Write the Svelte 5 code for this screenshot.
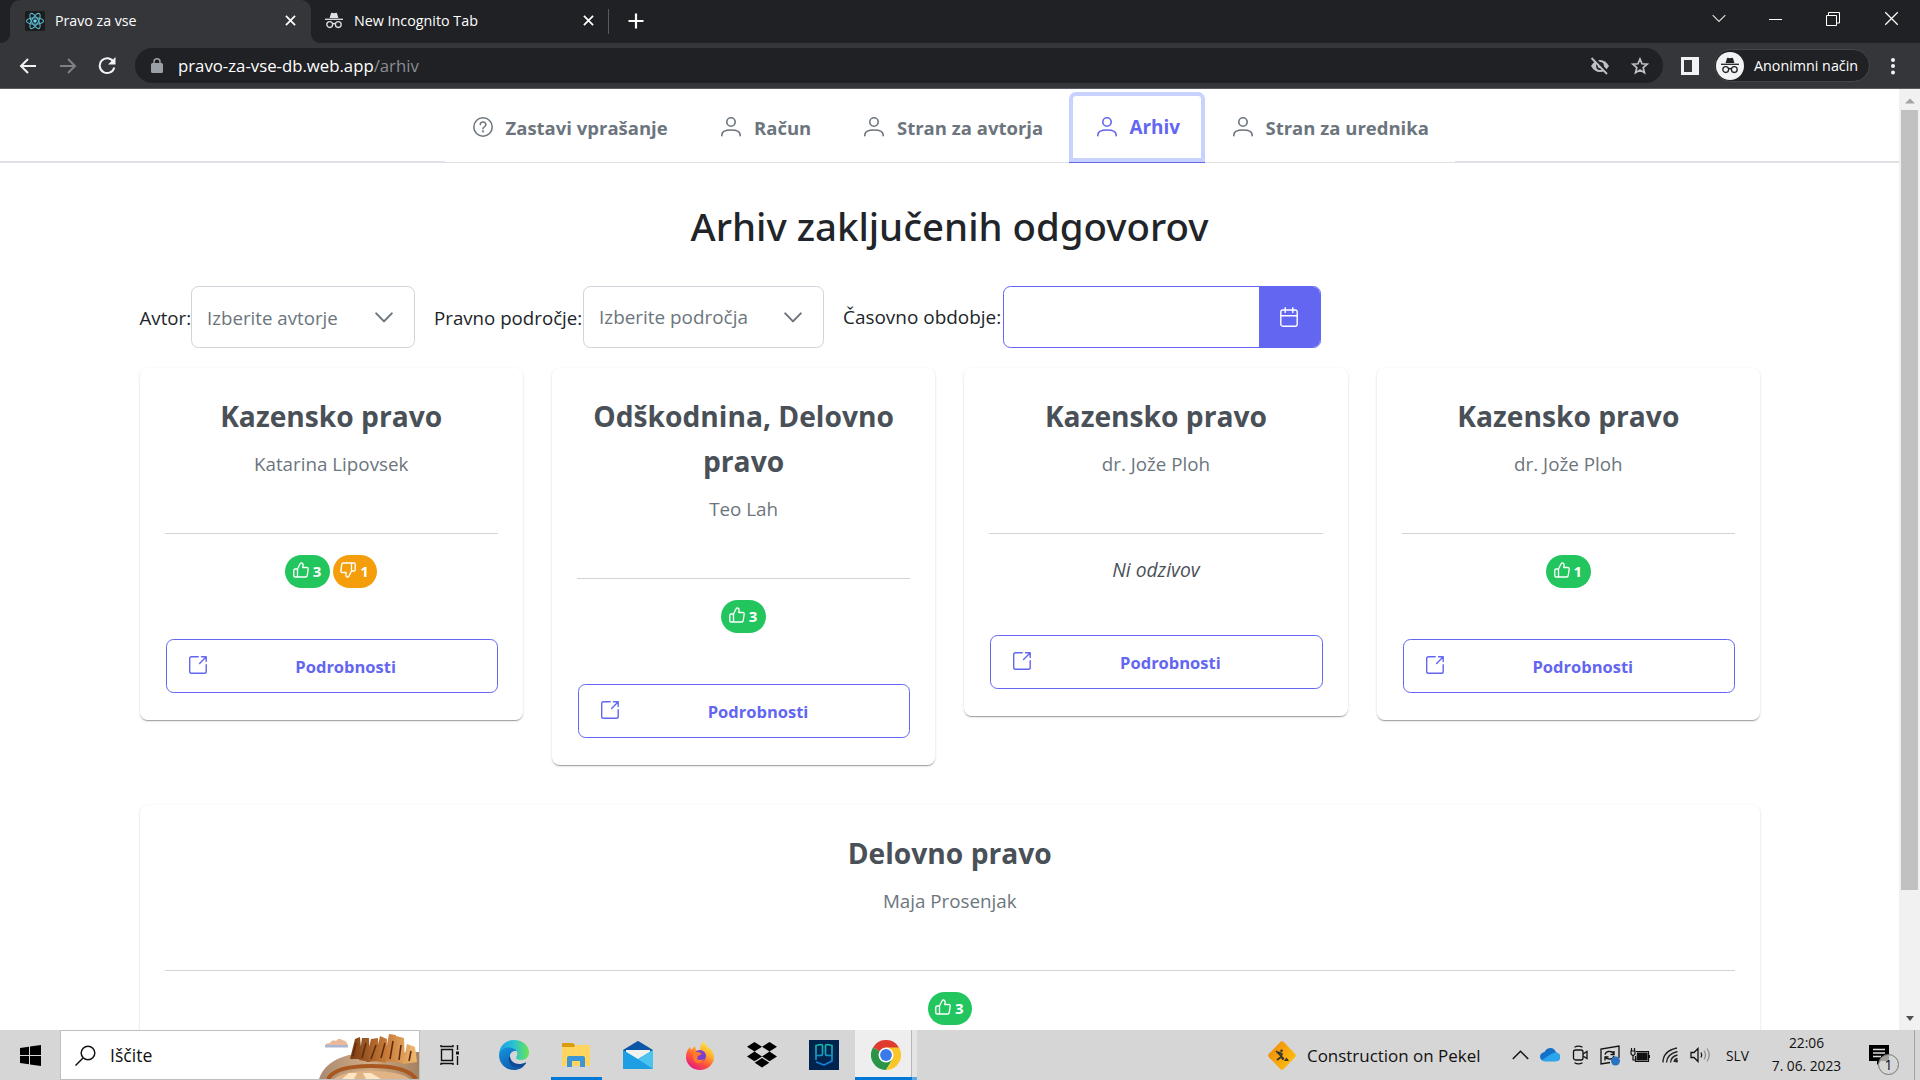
<script>
  const menu = [
    { label: 'Zastavi vprašanje', icon: 'question', key: 'ask' },
    { label: 'Račun', icon: 'user', key: 'account' },
    { label: 'Stran za avtorja', icon: 'user', key: 'writer' },
    { label: 'Arhiv', icon: 'user', key: 'archive', active: true },
    { label: 'Stran za urednika', icon: 'user', key: 'editor' }
  ];

  const cards = [
    { title: 'Kazensko pravo', author: 'Katarina Lipovsek', up: 3, down: 1 },
    { title: 'Odškodnina, Delovno pravo', author: 'Teo Lah', up: 3 },
    { title: 'Kazensko pravo', author: 'dr. Jože Ploh' },
    { title: 'Kazensko pravo', author: 'dr. Jože Ploh', up: 1 },
    { title: 'Delovno pravo', author: 'Maja Prosenjak', up: 3, wide: true }
  ];
</script>

{#snippet user()}
  <svg width="20" height="20" viewBox="0 0 20 20" fill="none" stroke="currentColor" stroke-width="1.6" stroke-linecap="round">
    <circle cx="10" cy="5" r="4.2" />
    <path d="M.8 18.800v-.7c0-3.800 3.400-5.100 9.200-5.100s9.200 1.300 9.200 5.100v.7" />
  </svg>
{/snippet}

{#snippet question()}
  <svg width="20" height="20" viewBox="0 0 20 20" fill="none" stroke="currentColor" stroke-width="1.5" stroke-linecap="round">
    <circle cx="10" cy="10" r="9.2" />
    <path d="M7.3 7.6a2.75 2.6 0 1 1 4.1 2.2c-1 .5-1.4.8-1.4 1.9" />
    <circle cx="10" cy="14.4" r=".4" fill="currentColor" />
  </svg>
{/snippet}

{#snippet incognito(color)}
  <svg width="18" height="17" viewBox="0 0 18 17" fill="none" stroke={color} stroke-width="1.3">
    <path d="M4.6 6 6 1.2q.2-.6.9-.4l2.1.5 2.1-.5q.7-.2.9.4L13.400 6z" fill={color} stroke="none" />
    <path d="M0 7.300h18" />
    <circle cx="4.700" cy="12.600" r="2.900" />
    <circle cx="13.300" cy="12.600" r="2.900" />
    <path d="M7.500 12q1.500-1 3 0" />
  </svg>
{/snippet}

{#snippet cross(size, w)}
  <svg width={size} height={size} viewBox="0 0 12 12" fill="none" stroke="#fff" stroke-width={w}><path d="M1 1l10 10M11 1 1 11" /></svg>
{/snippet}

{#snippet thumb()}
  <svg width="16" height="16" viewBox="0 0 16 16" fill="none" stroke="#fff" stroke-width="1.35" stroke-linejoin="round">
    <path d="M4.500 7h-2.500q-1.200 0-1.200 1.200v5.600q0 1.200 1.200 1.200h2.500zM4.500 7l2.600-5.300q.4-.9 1.300-.9 1.800.2 1.700 2.200l-.3 2.500h4q1.500 0 1.400 1.500l-1 6.600q-.2 1.400-1.500 1.400H4.500" />
  </svg>
{/snippet}

{#snippet select(label, placeholder, cls)}
  <span class="label {cls}-label">{label}</span>
  <div class="select {cls}">
    <span>{placeholder}</span>
    <svg width="18" height="11" viewBox="0 0 18 11" fill="none" stroke="#6c757d" stroke-width="2" stroke-linecap="round" stroke-linejoin="round"><path d="M1.200 1.400 9 9.400l7.800-8" /></svg>
  </div>
{/snippet}

<div class="screen">
  <header class="browser">
    <div class="tabs">
      <div class="tab current">
        <svg class="favicon" width="20" height="20" viewBox="0 0 20 20">
          <rect width="20" height="20" rx="2" fill="#1c1c1c" />
          <g fill="none" stroke="#58b7cf" stroke-width="1.100">
            <ellipse cx="10" cy="10" rx="8.600" ry="3.300" />
            <ellipse cx="10" cy="10" rx="8.600" ry="3.300" transform="rotate(60 10 10)" />
            <ellipse cx="10" cy="10" rx="8.600" ry="3.300" transform="rotate(120 10 10)" />
          </g>
          <circle cx="10" cy="10" r="1.700" fill="#61dafb" />
        </svg>
        <span>Pravo za vse</span>
        {@render cross(11, 1.9)}
      </div>
      <div class="tab">
        {@render incognito('#dfe1e5')}
        <span>New Incognito Tab</span>
        {@render cross(11, 1.9)}
      </div>
      <svg class="plus" width="16" height="16" viewBox="0 0 16 16" stroke="#fff" stroke-width="2.200"><path d="M8 .5v15M.5 8h15" /></svg>
      <div class="window">
        <svg width="14" height="9" viewBox="0 0 14 9" fill="none" stroke="#ddd" stroke-width="1.200"><path d="m.7 1.200 6.300 6.300 6.300-6.300" /></svg>
        <svg width="13" height="14" viewBox="0 0 13 14" stroke="#fff"><path d="M0 7.500h13" /></svg>
        <svg width="14" height="14" viewBox="0 0 14 14" fill="none" stroke="#fff"><path d="M.5 3.500h10v10H.5zM2.500 3.500v-3h11v10.500h-3" /></svg>
        {@render cross(15, 1)}
      </div>
    </div>

    <div class="toolbar">
      <svg width="17" height="16" viewBox="0 0 17 16" fill="none" stroke="#f1f3f4" stroke-width="2"><path d="M17 8H2M9 1 2 8l7 7" /></svg>
      <svg width="17" height="16" viewBox="0 0 17 16" fill="none" stroke="#808184" stroke-width="2"><path d="M0 8h15M8 1l7 7-7 7" /></svg>
      <svg class="reload" width="18" height="18" viewBox="0 0 18 18" fill="none" stroke="#f1f3f4" stroke-width="2"><path d="M15.400 4.700a7.400 7.400 0 1 0 .9 5.800" /><path d="M17.500 0v7.500H10z" fill="#f1f3f4" stroke="none" /></svg>
      <div class="omnibox">
        <svg width="12" height="15" viewBox="0 0 12 15"><rect y="5" width="12" height="10" rx="1.500" fill="#9aa0a6" /><path d="M3 6V3.800a3 3 0 0 1 6 0V6" fill="none" stroke="#9aa0a6" stroke-width="1.500" /></svg>
        <span class="url">pravo-za-vse-db.web.app<i>/arhiv</i></span>
        <svg width="20" height="18" viewBox="0 0 20 18"><path d="M1 9q3.500-6 9-6t9 6q-3.500 6-9 6T1 9z" fill="#bdc1c6" /><circle cx="10" cy="9" r="3.900" fill="#202124" /><circle cx="10" cy="9" r="2.300" fill="#bdc1c6" /><path d="M3 0l15 16" stroke="#202124" stroke-width="3" /><path d="M1.500 1 17 17" stroke="#bdc1c6" stroke-width="1.800" /></svg>
        <svg width="18" height="18" viewBox="0 0 18 18" fill="none" stroke="#bdc1c6" stroke-width="1.700"><path d="m9 2 2 4.800 5.200.4-4 3.400 1.300 5.100L9 13l-4.500 2.700 1.300-5.100-4-3.400 5.200-.4z" /></svg>
      </div>
      <svg class="panel" width="18" height="18" viewBox="0 0 18 18"><path d="M0 0h18v18H0zM3 3v12h8V3z" fill="#f1f3f4" fill-rule="evenodd" /></svg>
      <div class="profile">
        <div class="avatar">{@render incognito('#202124')}</div>
        <span>Anonimni način</span>
      </div>
      <svg width="4" height="18" viewBox="0 0 4 18" fill="#f1f3f4"><circle cx="2" cy="3" r="2" /><circle cx="2" cy="9" r="2" /><circle cx="2" cy="15.500" r="2" /></svg>
    </div>
  </header>

  <div class="viewport">
    <main>
      <nav>
        <ul>
          {#each menu as item}
            <li class={[item.key, item.active && 'active']}>
              {#if item.icon === 'question'}{@render question()}{:else}{@render user()}{/if}
              <span>{item.label}</span>
            </li>
          {/each}
        </ul>
      </nav>

      <h1>Arhiv zaključenih odgovorov</h1>

      <div class="filters">
        {@render select('Avtor:', 'Izberite avtorje', 'authors')}
        {@render select('Pravno področje:', 'Izberite področja', 'fields')}
        <span class="label date-label">Časovno obdobje:</span>
        <div class="date">
          <button aria-label="Koledar">
            <svg width="18" height="20" viewBox="0 0 18 20" fill="none" stroke="#fff" stroke-width="1.400" stroke-linecap="round"><rect x=".8" y="3" width="16.400" height="16.200" rx="2" /><path d="M1 8.800h16M5.200.8v4.700M12.800.8v4.700" /></svg>
          </button>
        </div>
      </div>

      <div class="cards">
        {#each cards as card}
          <article class:wide={card.wide}>
            <h2>{card.title}</h2>
            <p class="author">{card.author}</p>
            <hr />
            {#if card.up || card.down}
              <div class="badges">
                {#if card.up}<span class="badge up">{@render thumb()}{card.up}</span>{/if}
                {#if card.down}<span class="badge down">{@render thumb()}{card.down}</span>{/if}
              </div>
            {:else}
              <p class="none">Ni odzivov</p>
            {/if}
            {#if !card.wide}
              <button class="details">
                <svg width="18" height="18" viewBox="0 0 18 18" fill="none" stroke="currentColor" stroke-width="1.400" stroke-linecap="round" stroke-linejoin="round"><path d="M9.200.8H2.500Q.7.8.7 2.600v12.900q0 1.800 1.800 1.800h12.900q1.800 0 1.800-1.800V8.800M12.500.8h4.700v4.700M17 1l-6.400 6.400" /></svg>
                <span>Podrobnosti</span>
              </button>
            {/if}
          </article>
        {/each}
      </div>
    </main>
    <div class="scrollbar">
      <svg width="10" height="6" viewBox="0 0 10 6"><path d="M0 5.500 5 .5l5 5z" fill="#a3a3a3" /></svg>
      <div class="handle"></div>
      <svg width="8" height="5" viewBox="0 0 8 5"><path d="M0 0h8L4 5z" fill="#505050" /></svg>
    </div>
  </div>

  <footer>
    <div class="cell start"><svg width="21" height="21" viewBox="0 0 21 21"><path d="M0 3l9-1.300v8.300H0zM10 1.500 21 0v10H10zM0 11h9v8.300L0 18zM10 11h11v10l-11-1.500z" /></svg></div>
    <div class="search">
      <svg width="21" height="21" viewBox="0 0 21 21" fill="none" stroke="#111" stroke-width="1.500"><circle cx="13" cy="8" r="6.800" /><path d="M8 13l-7.500 7.500" /></svg>
      <span>Iščite</span>
      <svg class="art" width="100" height="46" viewBox="0 0 100 46">
        <defs>
          <linearGradient id="rock" x1="0" x2="1"><stop offset="0" stop-color="#7a3c12" /><stop offset=".55" stop-color="#c97c3a" /><stop offset="1" stop-color="#eebb72" /></linearGradient>
          <linearGradient id="sand" x1="0" x2="1"><stop offset="0" stop-color="#a98a70" /><stop offset=".5" stop-color="#d0ac86" /><stop offset="1" stop-color="#a48161" /></linearGradient>
        </defs>
        <path d="M6 13q0-3 5-3 2-4 6-2 3-4 6-1 5 0 6 6z" fill="#eab99b" /><path d="M6 12h23v2.500H6z" fill="#a9b5d2" />
        <path d="M0 46q6-18 30-24l70-3v27z" fill="url(#sand)" />
        <g fill="url(#rock)">
          <path d="m31 26 5-20 5-2 2 22zM40 27l3-22 7 0 1 24zM47 29l5-23 7-1 1 23zM56 28l5-25 7 3-1 24zM65 28l5-27 7 1v27zM75 28l2-25 8 2 1 26zM84 31l4-20 8 3 2 15z" />
        </g>
        <path d="M37 10l-3 13M47 10l-4 15M57 12l-5 14M66 10l-4 15M74 8l-3 18M82 12l-2 15M92 18l-2 10" stroke="#632d0d" stroke-width="1.600" />
        <path d="M9 46q7-13 43-13t45 13" fill="none" stroke="#a85820" stroke-width="4" />
        <path d="M15 46q8-8 37-8t39 8z" fill="#e1b488" />
        <path d="M23 46l7-6h8l-3 6zM47 46l-3-6h8l10 6z" fill="#ffe5c2" />
      </svg>
    </div>
    <div class="cell view"><svg width="20" height="20" viewBox="0 0 20 20" fill="none" stroke="#111" stroke-width="1.400"><path d="M1.500 4.500h11v11h-11zM1 0v1.500h12V0M1 20v-1.500h12V20M17.500 0v5M17.500 11v9" /><path d="M16 6.500h3v3h-3z" fill="#111" stroke="none" /></svg></div>
    <div class="cell">
      <svg width="30" height="30" viewBox="0 0 30 30">
        <defs>
          <linearGradient id="edge-a" x1="0" x2="1"><stop offset="0" stop-color="#1b9de2" /><stop offset=".5" stop-color="#2bc3d2" /><stop offset="1" stop-color="#6be34f" /></linearGradient>
          <linearGradient id="edge-b" x1="0" x2=".7" y2="1"><stop offset="0" stop-color="#1594e0" /><stop offset="1" stop-color="#0d57a8" /></linearGradient>
        </defs>
        <path d="M0 14C1 5 7 0 15 0c9 0 15 6 15 12.500 0 5-4 7.500-8 7.500-5 0-5.500-2-4.200-4C20 11 15 8 10 8.500 5 9 2 11 0 14z" fill="url(#edge-a)" />
        <path d="M0 15c1-5 5-7.500 10-7.500 3 0 6 1.500 7.500 3.500-4-.5-7 2-6.500 6 .6 6 8 9.500 16 6C24 28 20 30 15 30 6.500 30 0 23.500 0 15z" fill="url(#edge-b)" />
        <path d="M11 16c0 7 8 10 15.500 6.500q1-.3.500.8C23 29 14 29 10.500 23Q8.500 18 11 16z" fill="#124a93" />
      </svg>
    </div>
    <div class="cell running"><svg width="28" height="24" viewBox="0 0 28 24"><path d="M0 1q0-1 1-1h9q1 0 2 1l2 3H0z" fill="#dd9c0b" /><path d="M0 4h12l2-2h13q1 0 1 1v20H0z" fill="#ffd560" /><path d="M5 24v-9q0-2 2-2h14q2 0 2 2v9h-5v-6h-8v6z" fill="#3d95d6" /></svg></div>
    <div class="cell"><svg width="30" height="28" viewBox="0 0 30 28"><path d="M0 9 14 .4q1-.6 2 0L30 9v5H0z" fill="#0d56a5" /><path d="M3 9h24v5l-12 6-12-6z" fill="#f2f2f2" /><path d="M0 9l15 9L30 9v19H0z" fill="#1e9fe4" /><path d="M30 9v19L15 18z" fill="#4cc3ee" /><path d="M3 9h24l-12 8.500z" fill="#f2f2f2" /></svg></div>
    <div class="cell">
      <svg width="28" height="29" viewBox="0 0 28 29">
        <defs><linearGradient id="fox" x1=".85" y1="0" x2=".25" y2="1"><stop offset="0" stop-color="#fff44f" /><stop offset=".35" stop-color="#ffb52c" /><stop offset=".65" stop-color="#ff5a35" /><stop offset="1" stop-color="#e31587" /></linearGradient></defs>
        <path d="M0 16C0 11 2 8 4 6l1 3 4-4 1 4 4 1q0-6 4-10 1 4 4 6l1 2 1-1q4 5 4 9a14 13 0 0 1-28 0z" fill="url(#fox)" />
        <circle cx="14" cy="15" r="6" fill="#7a3fd0" /><path d="M7 11l6 0 3 2-4 2-1 3q3 2 7 0-2 5-7 4-5-2-4-11z" fill="#ff7a2c" />
      </svg>
    </div>
    <div class="cell"><svg width="30" height="26" viewBox="0 0 30 26"><path d="M7.500 0 15 4.800 7.500 9.600 0 4.800zM22.500 0 30 4.800l-7.500 4.800L15 4.800zM7.500 9.600 15 14.400l-7.500 4.800L0 14.400zM22.500 9.600l7.500 4.800-7.500 4.800L15 14.400zM15 15.900l7.300 4.800L15 25.500l-7.300-4.800z" /></svg></div>
    <div class="cell">
      <svg width="30" height="30" viewBox="0 0 30 30" fill="none" stroke-width="1.700" stroke-linejoin="round">
        <defs><linearGradient id="pg" gradientUnits="userSpaceOnUse" x1="0" y1="4" x2="0" y2="26"><stop offset="0" stop-color="#15b8a6" /><stop offset="1" stop-color="#1677e0" /></linearGradient></defs>
        <rect width="30" height="30" fill="#00244d" /><path d="M7 20V5.500l5-1q1.500 0 1.500 1.500v7.500q0 2-2 2H7M23 15.500h-4.500q-2 0-2-2V6q0-1.500 1.500-1.500l5 1V21l-8 4-8-3" stroke="url(#pg)" />
      </svg>
    </div>
    <div class="cell chrome">
      <svg width="30" height="30" viewBox="0 0 30 30">
        <path d="M15 15 2 7.500A15 15 0 0 1 28 7.500z" fill="#df3b30" /><path d="M15 15 2 7.500A15 15 0 0 0 15 30l6.500-11z" fill="#2a9447" /><path d="M15 7.500h13A15 15 0 0 1 15 30l6.500-11z" fill="#fcc629" />
        <circle cx="15" cy="15" r="7.500" fill="#fff" /><circle cx="15" cy="15" r="5.900" fill="#3a7ae8" />
      </svg>
    </div>

    <div class="news">
      <svg width="28" height="29" viewBox="0 0 28 29">
        <defs><linearGradient id="sign" x1="0" x2="1" y1=".2" y2=".8"><stop offset="0" stop-color="#ee8a0c" /><stop offset="1" stop-color="#ffc30f" /></linearGradient></defs>
        <path d="M12.500.8q1.500-1.300 3 0L27.300 13q1.200 1.500 0 3L15.500 28.200q-1.500 1.300-3 0L.7 16q-1.200-1.500 0-3z" fill="url(#sign)" />
        <g fill="none" stroke="#333" stroke-width="1.600"><path d="M10 11l4 2-1 3-4 3M13 15l2 4M8 10l8 8" /></g><circle cx="13.500" cy="9.800" r="1.300" fill="#333" /><path d="M16 20l2.500-3.500L21 20z" fill="#333" />
      </svg>
      <span>Construction on Pekel</span>
    </div>
    <div class="tray"><svg width="17" height="10" viewBox="0 0 17 10" fill="none" stroke="#111" stroke-width="1.500"><path d="m.8 9 7.700-7.700L16.200 9" /></svg></div>
    <div class="tray"><svg width="20" height="14" viewBox="0 0 20 14"><path d="M4 13Q0 12 0 8.500T4.500 4Q6.500 0 10.500 0T16 4.500q4 .5 4 4.500t-4 4z" fill="#1570c9" /><path d="M2 12l9-6q2-1.500 5-1.500 4 .5 4 4.500t-4 4.500H5q-2 0-3-1.500z" fill="#2ba5ec" /></svg></div>
    <div class="tray"><svg width="16" height="20" viewBox="0 0 16 20" fill="none" stroke="#111" stroke-width="1.300"><rect x="1.500" y="5" width="9.500" height="10" rx="2" /><path d="m11 9 4-2.500v7L11 11M2.500 2.300q4-2.200 8 0M2.500 17.700q4 2.200 8 0" /></svg></div>
    <div class="tray"><svg width="20" height="21" viewBox="0 0 20 21" fill="none" stroke="#111" stroke-width="1.300"><path d="M10 17.500 1 19V4l18-3v12" /><path d="M5 9.500q1-3.500 5-3 3 0 4 2.500M14 6v3.500h-3.500M14 11q-1 3.500-5 3-3 0-4-2M5 15.500V12h3.500" /><circle cx="15.500" cy="16" r="4.500" fill="#2a73c0" stroke="none" /></svg></div>
    <div class="tray"><svg width="20" height="15" viewBox="0 0 20 15" fill="none" stroke="#111" stroke-width="1.200"><path d="M6 3.500h12.500v10h-13V8" /><path d="M7.500 5h9.500v7H7z" fill="#111" /><path d="M19.500 7v3M1 3h4v3L3.500 7.500h-1L1 6zM1.500 0v3M4.500 0v3M3 7.500V12h2" /></svg></div>
    <div class="tray"><svg width="17" height="16" viewBox="0 0 17 16" fill="none" stroke="#222" stroke-width="1.300"><path d="M1 15.500Q1 4 15 1M4.500 15.500Q5 7 15.500 4.500M8.500 15.500q.5-6 7-7.500M12 15q.5-3 3.500-3.500" /><circle cx="14.500" cy="14" r="1.500" fill="#222" stroke="none" /></svg></div>
    <div class="tray"><svg width="21" height="16" viewBox="0 0 21 16" fill="none" stroke="#111" stroke-width="1.300"><path d="M1 5.500h3l4-4v13l-4-4H1z" /><path d="M11 5.500q1.500 2.500 0 5" /><path d="M14 3.500q3 4.500 0 9M17 1.500q4.500 6.500 0 13" stroke="#8d8d8d" /></svg></div>
    <div class="lang">SLV</div>
    <div class="clock"><span>22:06</span><span>7. 06. 2023</span></div>
    <div class="notes">
      <svg width="20" height="21" viewBox="0 0 20 21"><path d="M0 0h20v16h-8l-4 4v-4H0z" /><path d="M4 4.500h12M4 8h12M4 11.500h8" stroke="#ddd" stroke-width="1.400" /></svg>
      <b>1</b>
    </div>
    <div class="peek"></div>
  </footer>
</div>

<style>
  :global(body) { margin: 0; overflow: hidden; }
  .screen { width: 1920px; height: 1080px; display: flex; flex-direction: column; overflow: hidden; background: #fff; font: 18.7px "Open Sans", "Noto Sans", sans-serif; color: #212529; }
  .screen *, .screen *::before, .screen *::after { box-sizing: border-box; }
  svg { display: block; flex: none; }
  h1, h2, p, ul { margin: 0; padding: 0; }

  .browser { flex: none; height: 89px; background: #35363a; border-bottom: 1px solid #5b5c5f; }
  .tabs { height: 43px; display: flex; align-items: flex-start; background: #202124; padding-left: 10px; }
  .tab { position: relative; height: 43px; display: flex; align-items: center; color: #fff; font-size: 14.2px; white-space: nowrap; width: 298px; padding: 0 15px 2px 14px; }
  .tab span { flex: 1; padding-left: 10px; }
  .tab.current { width: 301px; padding-left: 15px; background: #35363a; border-radius: 10px 10px 0 0; }
  .tab.current::before, .tab.current::after { content: ""; position: absolute; bottom: 0; width: 10px; height: 10px; }
  .tab.current::before { left: -10px; background: radial-gradient(circle at 0 0, #202124 10px, #35363a 10.5px); }
  .tab.current::after { right: -10px; background: radial-gradient(circle at 100% 0, #202124 10px, #35363a 10.5px); }
  .tab:not(.current)::after { content: ""; position: absolute; right: 0; top: 9px; width: 1px; height: 25px; background: #5a5b5f; }
  .tab:not(.current) span { font-size: 14.300px; padding-left: 11px; }
  .plus { margin: 13px 0 0 19px; }
  .window { margin: 11px 21px 0 auto; display: flex; align-items: center; }
  .window svg:nth-child(1) { margin-right: 43px; }
  .window svg:nth-child(2) { margin-right: 44px; }
  .window svg:nth-child(3) { margin-right: 44px; }
  .toolbar { height: 45px; display: flex; align-items: center; padding: 0 25px 0 19px; }
  .toolbar > svg:nth-child(2) { margin-left: 24px; }
  .reload { margin-left: 21px; }
  .omnibox { width: 1528px; height: 35px; margin-left: 19px; border-radius: 18px; background: #202124; display: flex; align-items: center; padding: 0 14px 0 16px; color: #fff; }
  .url { flex: 1; padding-left: 15px; font-size: 16.750px; line-height: 33px; }
  .url i { font-style: normal; color: #8b8f94; }
  .omnibox svg:nth-of-type(3) { margin-left: 21px; }
  .panel { margin-left: 18px; }
  .profile { width: 156px; height: 33px; margin: 0 21px 0 15px; border: 1px solid #46474b; border-radius: 17px; background: #202124; display: flex; align-items: center; color: #fff; font-size: 14.300px; line-height: 31px; white-space: nowrap; }
  .profile span { margin-top: -1px; }
  .avatar { width: 28px; height: 28px; margin: 0 10px 0 1px; border-radius: 50%; background: #f1f3f4; display: grid; place-items: center; }

  .viewport { flex: 1; min-height: 0; display: flex; overflow: hidden; }
  main { width: 1899px; overflow: hidden; }
  .scrollbar { width: 21px; background: #f1f1f1; display: flex; flex-direction: column; align-items: center; padding: 9px 0 8px; }
  .handle { width: 17px; height: 780px; margin: 6px 0 126px; background: #c1c1c1; flex: none; }

  nav { height: 74px; border-bottom: 2px solid #dee2e6; display: flex; justify-content: center; }
  ul { width: 1010px; height: 74px; display: flex; list-style: none; background: #fff; border-bottom: 1px solid #dee2e6; }
  li { height: 74px; padding: 3px 0 0 28px; display: flex; align-items: center; font-size: 18.500px; font-weight: 700; color: #6c757d; white-space: nowrap; }
  li span { margin-left: 13px; }
  li svg { margin-top: -1px; }
  .ask { width: 248.500px; }
  .account { width: 143px; }
  .writer { width: 232.500px; }
  .archive { width: 136px; font-size: 18.900px; }
  .active { height: 71px; margin-top: 3px; padding-top: 0; color: #6366f1; border-bottom: 1px solid #6366f1; border-radius: 7px 7px 0 0; box-shadow: inset 0 0 0 4px #c7d2fe; }

  h1 { height: 60px; margin: 33px 0 0; text-align: center; font: 500 38.400px/60px "Noto Sans", "Open Sans", sans-serif; }
  .filters { height: 62px; margin: 30px 139.500px 0; display: flex; align-items: center; white-space: nowrap; }
  .authors-label { width: 51.500px; }
  .fields-label { width: 149px; }
  .date-label { width: 159.500px; font-size: 18.950px; }
  .select { height: 62px; border: 1px solid #ced4da; border-radius: 7.500px; display: flex; align-items: center; justify-content: space-between; padding: 0 21px 0 15px; color: #6c757d; margin-right: 19px; }
  .authors { width: 224px; }
  .fields { width: 241px; font-size: 18.900px; }
  .date { width: 318px; height: 62px; border: 1px solid #6366f1; border-radius: 7.500px; display: flex; justify-content: flex-end; overflow: hidden; }
  .date button { width: 61px; height: 60px; border: 0; background: #6366f1; display: grid; place-items: center; padding: 0; }

  .cards { display: grid; grid-template-columns: repeat(4, 1fr); gap: 40px 29px; align-items: start; margin: 19.500px 139px 0 139.500px; }
  article { padding: 25px 25px 27px; border-radius: 7.500px; background: #fff; box-shadow: 0 2px 1px -1px rgba(0,0,0,.2), 0 1px 1px rgba(0,0,0,.14), 0 1px 3px rgba(0,0,0,.12); text-align: center; }
  .wide { grid-column: 1 / -1; padding-bottom: 108px; }
  h2 { padding-top: 1px; font-size: 28.200px; line-height: 45px; font-weight: 700; color: #495057; }
  .author { margin: 10.500px 0 53.500px; line-height: 30px; color: #6c757d; font-size: 18.800px; }
  hr { height: 1px; border: 0; margin: 0; background: #d1d3d5; }
  .badges { height: 33px; margin: 21px 0 51px; display: flex; justify-content: center; gap: 3px; }
  .badge { height: 33px; width: 44.500px; border-radius: 17px; display: flex; align-items: center; justify-content: center; gap: 4px; color: #fff; font-size: 15px; line-height: 31px; font-weight: 700; padding-right: 1px; }
  .badge svg { margin-top: -2px; }
  .up { background: #22c55e; }
  .down { background: #f59e0b; }
  .down svg { transform: rotate(180deg); }
  .none { height: 29px; line-height: 29px; margin: 21px 0 51px; font-size: 19.300px; font-style: italic; color: #495057; }
  .details { width: calc(100% - 1px); height: 54px; margin-left: 1px; padding: 0 23px 0 22px; display: flex; align-items: center; border: 1px solid #6366f1; border-radius: 7.500px; background: #fff; color: #6366f1; font: 700 16.500px "Open Sans", sans-serif; }
  .details svg { margin-top: -2px; }
  .details span { flex: 1; padding: 1px 0 0 11px; }

  footer { flex: none; height: 50px; display: flex; background: #d6d6d6; color: #111; }
  .cell { width: 62px; display: grid; place-items: center; }
  .start { width: 60px; }
  .view { width: 63px; padding-right: 3px; }
  .search { width: 360px; display: flex; align-items: center; background: #fff; border: 1px solid #bfbfbf; padding-left: 14px; font-size: 17.600px; }
  .search span { flex: 1; padding-left: 14px; }
  .art { align-self: flex-end; }
  .running { background: linear-gradient(#0078d7, #0078d7) 6px 100% / 51px 3px no-repeat; }
  .chrome { background: linear-gradient(90deg, #0078d7 57px, #5ca9e6 57px) 0 100% / 100% 3px no-repeat, linear-gradient(90deg, #eee 56px, #b5b5b5 56px 57px, #e4e4e4 57px); }
  .chrome svg { margin-right: 1px; }
  .news { margin-left: auto; width: 237px; display: flex; align-items: center; gap: 11px; font-size: 16.950px; white-space: nowrap; }
  .tray { width: 30px; display: grid; place-items: center; }
  .lang { width: 45px; font-size: 13.800px; display: grid; place-items: center; }
  .clock { width: 93px; font-size: 13.750px; line-height: 22.500px; padding-top: 2px; text-align: center; display: flex; flex-direction: column; }
  .notes { width: 61px; padding: 15px 0 0 16px; position: relative; }
  .notes b { position: absolute; left: 25px; top: 24px; width: 21px; height: 21px; border: 1px solid #777; border-radius: 50%; background: rgba(214,214,214,.75); font-size: 14px; font-weight: 400; line-height: 19px; text-align: center; }
  .peek { width: 6px; border-left: 1px solid #a3a3a3; }
</style>
